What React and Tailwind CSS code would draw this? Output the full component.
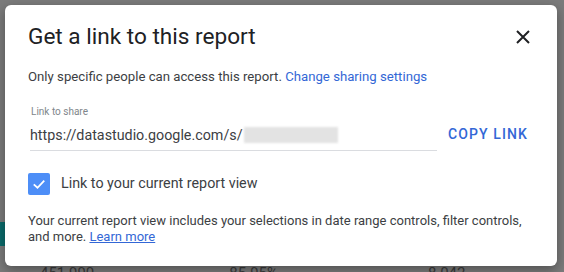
export default function App() {
  return (
    <div
      className="relative w-[564px] h-[272px] overflow-hidden bg-[#7b7b7b]"
      style={{ fontFamily: 'Roboto, "Liberation Sans", sans-serif' }}
    >
      {/* page behind the overlay */}
      <div className="absolute left-0 top-[222px] w-[5px] h-[24px] bg-[#0b6b6b]" />
      <div className="absolute left-0 top-[262px] w-full flex text-[15px] text-[#3a3a3a]">
        <span className="ml-[40px]">451 990</span>
        <span className="ml-[135px]">85.95%</span>
        <span className="ml-[150px]">8 042</span>
      </div>

      <div className="absolute left-[5px] top-[5px] w-[552px] h-[261px] bg-white rounded-[6px] shadow-[0_4px_12px_rgba(0,0,0,0.35)] px-[23px] pt-[19px]">
        <div className="flex items-start justify-between">
          <h1 className="text-[22.6px] leading-[26px] text-[#202124]">Get a link to this report</h1>
          <button className="mt-[6px] mr-[4px] w-[14px] h-[14px] text-[#202124]">
            <svg viewBox="0 0 14 14" width="14" height="14">
              <path d="M1 1 L13 13 M13 1 L1 13" stroke="currentColor" strokeWidth="2" />
            </svg>
          </button>
        </div>

        <p className="mt-[19px] text-[13.2px] leading-[16px] text-[#3c4043]">
          Only specific people can access this report.{' '}
          <span className="text-[#3367d6]">Change sharing settings</span>
        </p>

        <div className="mt-[21px] flex items-end">
          <div className="w-[407px] ml-[2px] border-b border-[#dadce0] pb-[6px]">
            <div className="text-[10px] leading-[12px] text-[#80868b] ml-[1px]">Link to share</div>
            <div className="mt-[8px] flex items-center text-[14.3px] leading-[18px] text-[#3c4043]">
              <span>https://datastudio.google.com/s/</span>
              <span className="ml-[1px] w-[94px] h-[16px] bg-[#e3e3e3] blur-[1px]" />
            </div>
          </div>
          <button className="ml-[11px] mb-[6px] text-[14px] font-medium tracking-[1.1px] text-[#3367d6]">
            COPY LINK
          </button>
        </div>

        <label className="mt-[22px] flex items-center">
          <span className="w-[22px] h-[22px] rounded-[2px] bg-[#4d8ef7] flex items-center justify-center">
            <svg viewBox="0 0 24 24" width="18" height="18">
              <path d="M5 12.5 L10 17 L19 7.5" fill="none" stroke="white" strokeWidth="2.4" />
            </svg>
          </span>
          <span className="ml-[11px] text-[14.3px] text-[#3c4043]">Link to your current report view</span>
        </label>

        <p className="mt-[18px] text-[13px] leading-[16px] text-[#3c4043]">
          Your current report view includes your selections in date range controls, filter controls,
          and more. <span className="text-[#3367d6] underline">Learn more</span>
        </p>
      </div>
    </div>
  );
}
